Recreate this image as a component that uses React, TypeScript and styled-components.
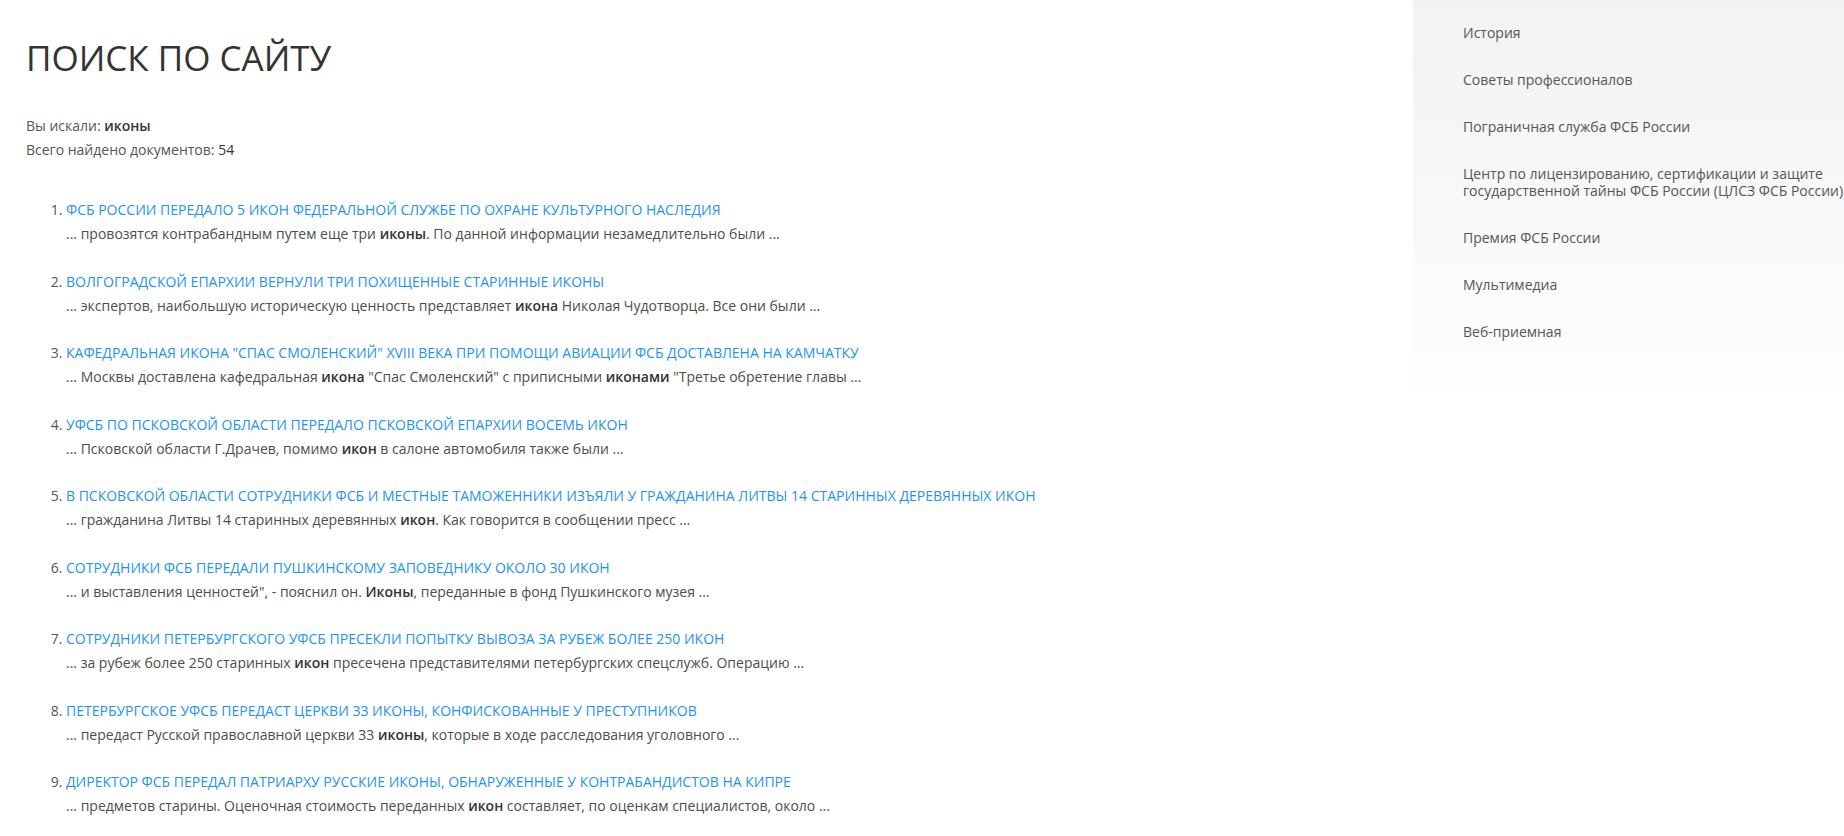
import styled, { createGlobalStyle } from 'styled-components'

const GlobalStyle = createGlobalStyle`
  html, body {
    margin: 0;
    padding: 0;
    background: #fff;
  }
  body {
    font-family: "Open Sans", "Liberation Sans", sans-serif;
    color: #555;
  }
`

const Page = styled.div`
  display: flex;
  align-items: flex-start;
  width: 1844px;
  min-height: 836px;
`

const Main = styled.main`
  flex: 1;
  padding-left: 26px;
`

const Title = styled.h1`
  margin: 38px 0 0;
  font-size: 35px;
  line-height: 40px;
  font-weight: 400;
  color: #333;
  text-transform: uppercase;
`

const Info = styled.div`
  margin-top: 36px;
  font-size: 14px;
  line-height: 24px;
  color: #555;

  b {
    font-weight: 600;
    color: #333;
  }
`

const Count = styled.span`
  color: #333;
`

const Results = styled.ol`
  margin: 36px 0 0;
  padding-left: 40px;
  font-size: 14px;
  color: #555;
`

const Item = styled.li`
  line-height: 24px;
  margin-bottom: 23.5px;
`

const ItemLink = styled.a`
  display: block;
  color: #1e93f2;
  text-decoration: none;
  text-transform: uppercase;
`

const Snippet = styled.div`
  color: #4d4d4d;

  b {
    font-weight: 600;
    color: #333;
  }
`

const Sidebar = styled.aside`
  width: 381px;
  padding: 9px 0 38px 50px;
  background: linear-gradient(to bottom, #f2f2f2 0%, #fefefe 100%);
`

const SideLink = styled.a`
  display: block;
  padding: 15px 0;
  font-size: 14px;
  line-height: 17px;
  color: #555;
  text-decoration: none;
  white-space: nowrap;
`

type Result = { title: string; snippet: React.ReactNode }

const results: Result[] = [
  {
    title: 'ФСБ России передало 5 икон Федеральной службе по охране культурного наследия',
    snippet: <>... провозятся контрабандным путем еще три <b>иконы</b>. По данной информации незамедлительно были ...</>,
  },
  {
    title: 'Волгоградской епархии вернули три похищенные старинные иконы',
    snippet: <>... экспертов, наибольшую историческую ценность представляет <b>икона</b> Николая Чудотворца. Все они были ...</>,
  },
  {
    title: 'Кафедральная икона "Спас Смоленский" XVIII века при помощи авиации ФСБ доставлена на Камчатку',
    snippet: <>... Москвы доставлена кафедральная <b>икона</b> "Спас Смоленский" с приписными <b>иконами</b> "Третье обретение главы ...</>,
  },
  {
    title: 'УФСБ по Псковской области передало Псковской епархии восемь икон',
    snippet: <>... Псковской области Г.Драчев, помимо <b>икон</b> в салоне автомобиля также были ...</>,
  },
  {
    title: 'В Псковской области сотрудники ФСБ и местные таможенники изъяли у гражданина Литвы 14 старинных деревянных икон',
    snippet: <>... гражданина Литвы 14 старинных деревянных <b>икон</b>. Как говорится в сообщении пресс ...</>,
  },
  {
    title: 'Сотрудники ФСБ передали Пушкинскому заповеднику около 30 икон',
    snippet: <>... и выставления ценностей", - пояснил он. <b>Иконы</b>, переданные в фонд Пушкинского музея ...</>,
  },
  {
    title: 'Сотрудники Петербургского УФСБ пресекли попытку вывоза за рубеж более 250 икон',
    snippet: <>... за рубеж более 250 старинных <b>икон</b> пресечена представителями петербургских спецслужб. Операцию ...</>,
  },
  {
    title: 'Петербургское УФСБ передаст церкви 33 иконы, конфискованные у преступников',
    snippet: <>... передаст Русской православной церкви 33 <b>иконы</b>, которые в ходе расследования уголовного ...</>,
  },
  {
    title: 'Директор ФСБ передал Патриарху русские иконы, обнаруженные у контрабандистов на Кипре',
    snippet: <>... предметов старины. Оценочная стоимость переданных <b>икон</b> составляет, по оценкам специалистов, около ...</>,
  },
]

const menu: React.ReactNode[] = [
  'История',
  'Советы профессионалов',
  'Пограничная служба ФСБ России',
  <>Центр по лицензированию, сертификации и защите<br />государственной тайны ФСБ России (ЦЛСЗ ФСБ России)</>,
  'Премия ФСБ России',
  'Мультимедиа',
  'Веб-приемная',
]

export default function App() {
  return (
    <>
      <GlobalStyle />
      <Page>
        <Main>
          <Title>Поиск по сайту</Title>
          <Info>
            <div>Вы искали: <b>иконы</b></div>
            <div>Всего найдено документов: <Count>54</Count></div>
          </Info>
          <Results>
            {results.map((r, i) => (
              <Item key={i}>
                <ItemLink href="#">{r.title}</ItemLink>
                <Snippet>{r.snippet}</Snippet>
              </Item>
            ))}
          </Results>
        </Main>
        <Sidebar>
          {menu.map((m, i) => (
            <SideLink key={i} href="#">{m}</SideLink>
          ))}
        </Sidebar>
      </Page>
    </>
  )
}
